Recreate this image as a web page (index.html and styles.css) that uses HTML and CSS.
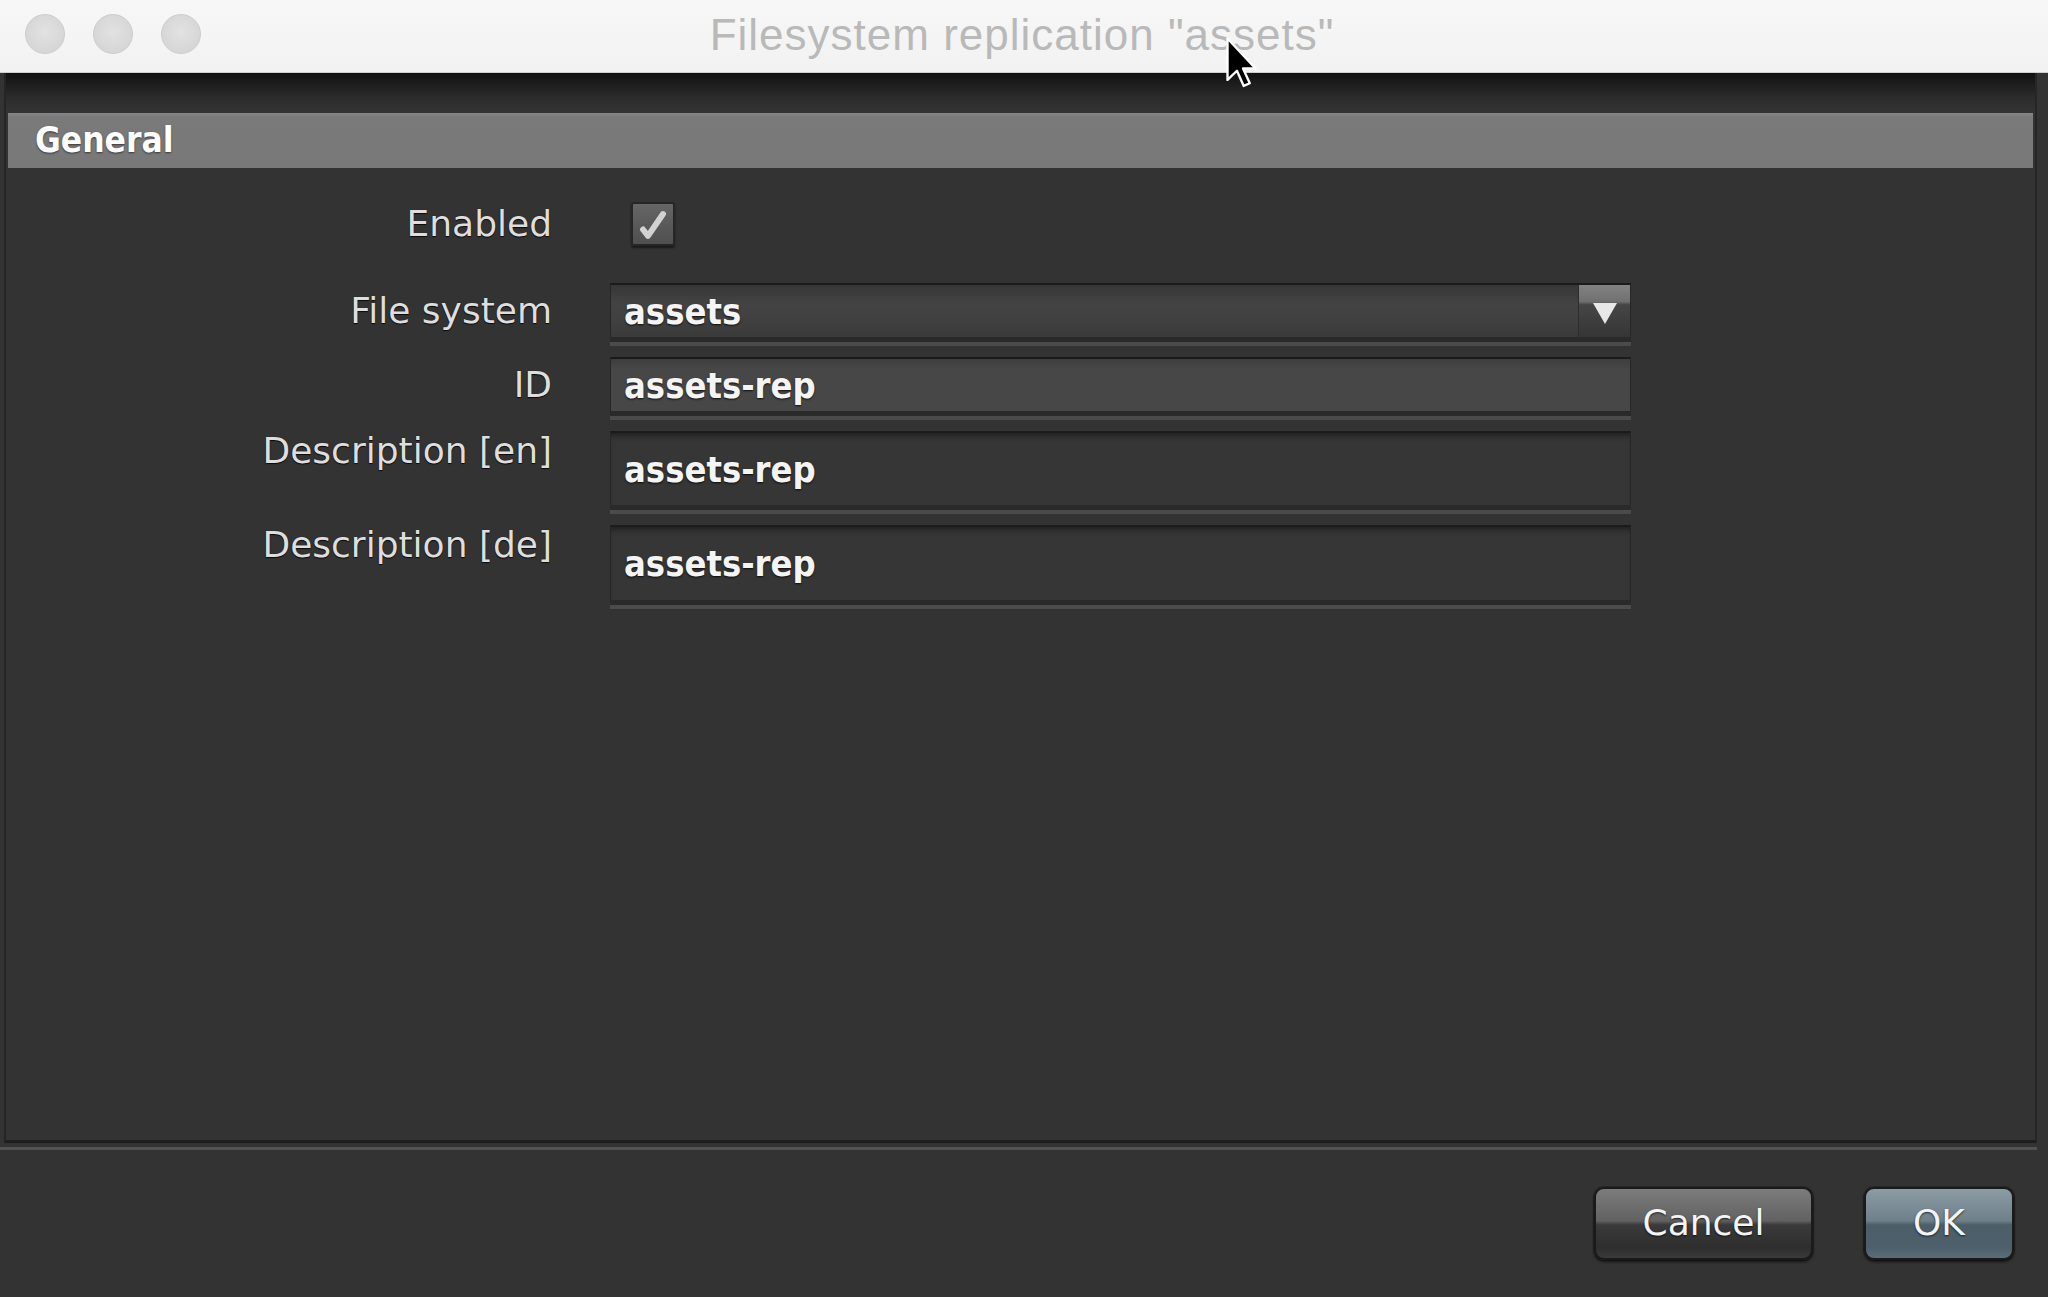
FILE: index.html
```html
<!DOCTYPE html>
<html lang="en">
<head>
<meta charset="utf-8">
<title>Filesystem replication "assets"</title>
<link rel="stylesheet" href="styles.css">
</head>
<body>
<div class="titlebar">
  <div class="lights">
    <span class="light"></span>
    <span class="light"></span>
    <span class="light"></span>
  </div>
  <div class="title">Filesystem replication "assets"</div>
  <svg class="cursor" viewBox="0 0 20 32" width="34" height="54">
    <path d="M2 1.5 L2 26 L7.6 20.6 L11.6 29.6 L15.2 28 L11.2 19.2 L18.6 19.2 Z" fill="#000" stroke="#fff" stroke-width="1.4" stroke-linejoin="round"/>
  </svg>
</div>

<div class="panel">
  <div class="section-header">General</div>
  <div class="form">
    <div class="row row-check">
      <label class="lbl">Enabled</label>
      <span class="checkbox">
        <svg viewBox="0 0 44 44" width="40" height="40">
          <path d="M11 28 L16.5 35 L33 11" fill="none" stroke="#d2d2d2" stroke-width="6.5" stroke-linecap="round" stroke-linejoin="round"/>
        </svg>
      </span>
    </div>
    <div class="row">
      <label class="lbl">File system</label>
      <div class="field combo">
        <span class="value">assets</span>
        <span class="arrow">
          <svg viewBox="0 0 26 24" width="26" height="24">
            <path d="M1 2 L25 2 L13 23 Z" fill="#e8e8e8"/>
          </svg>
        </span>
      </div>
    </div>
    <div class="row">
      <label class="lbl">ID</label>
      <div class="field idfield"><span class="value">assets-rep</span></div>
    </div>
    <div class="row row-top">
      <label class="lbl">Description [en]</label>
      <div class="field area"><span class="value">assets-rep</span></div>
    </div>
    <div class="row row-top">
      <label class="lbl">Description [de]</label>
      <div class="field area area2"><span class="value">assets-rep</span></div>
    </div>
  </div>
</div>
<div class="sep"></div>

<div class="footer">
  <button class="btn">Cancel</button>
  <button class="btn ok">OK</button>
</div>
</body>
</html>
```

FILE: styles.css
```css
* { box-sizing: border-box; }

html, body {
  margin: 0;
  padding: 0;
}

body {
  width: 2048px;
  height: 1297px;
  overflow: hidden;
  background: #333333;
  font-family: "DejaVu Sans", "Open Sans", sans-serif;
  display: flex;
  flex-direction: column;
}

/* ---------- title bar ---------- */
.titlebar {
  position: relative;
  height: 73px;
  flex: none;
  background: linear-gradient(#f7f7f7, #f2f2f2);
  border-bottom: 1px solid #cfcfcf;
  display: grid;
  align-items: center;
}

.lights {
  grid-area: 1 / 1;
  justify-self: start;
  display: flex;
  gap: 28px;
  padding-left: 25px;
  margin-top: -4px;
}

.light {
  width: 40px;
  height: 40px;
  border-radius: 50%;
  background: radial-gradient(circle at 50% 45%, #e2e2e2, #d6d6d6 70%);
  border: 1px solid #cdcdcd;
}

.title {
  grid-area: 1 / 1;
  justify-self: center;
  font-family: "Liberation Sans", Arial, sans-serif;
  font-size: 44px;
  letter-spacing: 1px;
  color: #b9b9b9;
  margin-top: -2px;
  margin-left: -4px;
}

.cursor {
  position: absolute;
  left: 1224px;
  top: 36px;
  z-index: 5;
}

/* ---------- panel ---------- */
.panel {
  flex: none;
  height: 1070px;
  margin: 0 11px 0 4px;
  border-left: 2px solid #252525;
  border-right: 2px solid #262626;
  border-bottom: 3px solid #1e1e1e;
  background: linear-gradient(#111111 0, #1c1c1c 10px, #2b2b2b 24px, #333333 38px, #333333 100%);
  padding: 40px 2px 0 2px;
}

.section-header {
  height: 55px;
  background: linear-gradient(#858585, #7a7a7a 8%, #787878);
  color: #ffffff;
  font-family: "DejaVu Sans Condensed", "DejaVu Sans", sans-serif;
  font-stretch: condensed;
  font-weight: bold;
  font-size: 35px;
  line-height: 55px;
  padding-left: 27px;
  text-shadow: 0 1px 2px rgba(0, 0, 0, 0.55);
}

.form {
  display: flex;
  flex-direction: column;
  gap: 19px;
  padding-top: 34px;
}

.row {
  display: flex;
  align-items: center;
}

.row-top {
  align-items: flex-start;
}

.row-check {
  margin-bottom: 18px;
}

.lbl {
  width: 544px;
  flex: none;
  text-align: right;
  font-size: 36px;
  line-height: 40px;
  color: #dedede;
  text-shadow: 0 1px 1px rgba(0, 0, 0, 0.8), 0 0 1px rgba(0, 0, 0, 0.6);
}

.checkbox {
  margin-left: 79px;
  width: 44px;
  height: 44px;
  border: 2px solid #262626;
  border-radius: 3px;
  background: linear-gradient(#666666, #5a5a5a 50%, #505050);
  box-shadow: 0 2px 2px rgba(0, 0, 0, 0.5);
  display: flex;
  align-items: center;
  justify-content: center;
}

.field {
  margin-left: 58px;
  width: 1021px;
  height: 55px;
  display: flex;
  align-items: center;
  border-top: 2px solid #1b1b1b;
  border-left: 1px solid #262626;
  border-right: 1px solid #262626;
  border-bottom: 1px solid #2a2a2a;
  box-shadow: 0 4px 0 #2a2a2a, 0 8px 0 #4b4b4b;
}

.value {
  flex: 1;
  padding-left: 13px;
  font-family: "DejaVu Sans Condensed", "DejaVu Sans", sans-serif;
  font-stretch: condensed;
  font-weight: bold;
  font-size: 36px;
  color: #f4f4f4;
  text-shadow: 0 1px 2px rgba(0, 0, 0, 0.8);
}

.combo {
  background: linear-gradient(#363636, #434343 35%, #414141 65%, #3a3a3a);
}

.arrow {
  align-self: stretch;
  width: 52px;
  flex: none;
  border-left: 1px solid #2c2c2c;
  background: linear-gradient(#828282, #707070 32%, #454545 38%, #3b3b3b 80%, #353535);
  display: flex;
  align-items: center;
  justify-content: center;
  padding-top: 4px;
}

.idfield {
  background: linear-gradient(#3e3e3e, #474747 20%, #474747);
}

.area {
  height: 75px;
  background: #363636;
  box-shadow: inset 0 6px 6px -4px #1c1c1c, 0 4px 0 #2a2a2a, 0 8px 0 #4b4b4b;
}

.area2 {
  height: 76px;
}

/* ---------- footer ---------- */
.sep {
  flex: none;
  height: 3px;
  margin: 4px 11px 0 0;
  background: #525252;
}

.footer {
  flex: 1;
  display: flex;
  justify-content: flex-end;
  align-items: flex-start;
  gap: 51px;
  padding: 37px 34px 0 0;
}

.btn {
  height: 73px;
  width: 219px;
  border: 2px solid #1a1a1a;
  border-radius: 10px;
  font-family: "DejaVu Sans", sans-serif;
  font-size: 36px;
  color: #f4f4f4;
  text-shadow: 0 1px 2px rgba(0, 0, 0, 0.7);
  background: linear-gradient(#7c7c7c, #626262 46%, #3a3a3a 52%, #2e2e2e 85%, #3a3a3a);
  box-shadow: 0 2px 3px rgba(0, 0, 0, 0.6), 0 0 0 1px rgba(0, 0, 0, 0.25);
  padding: 0;
  padding-bottom: 2px;
}

.btn.ok {
  width: 150px;
  background: linear-gradient(#8c9ca5, #6e808a 46%, #4c5e68 52%, #4d606b 85%, #5a6d78);
}
```
